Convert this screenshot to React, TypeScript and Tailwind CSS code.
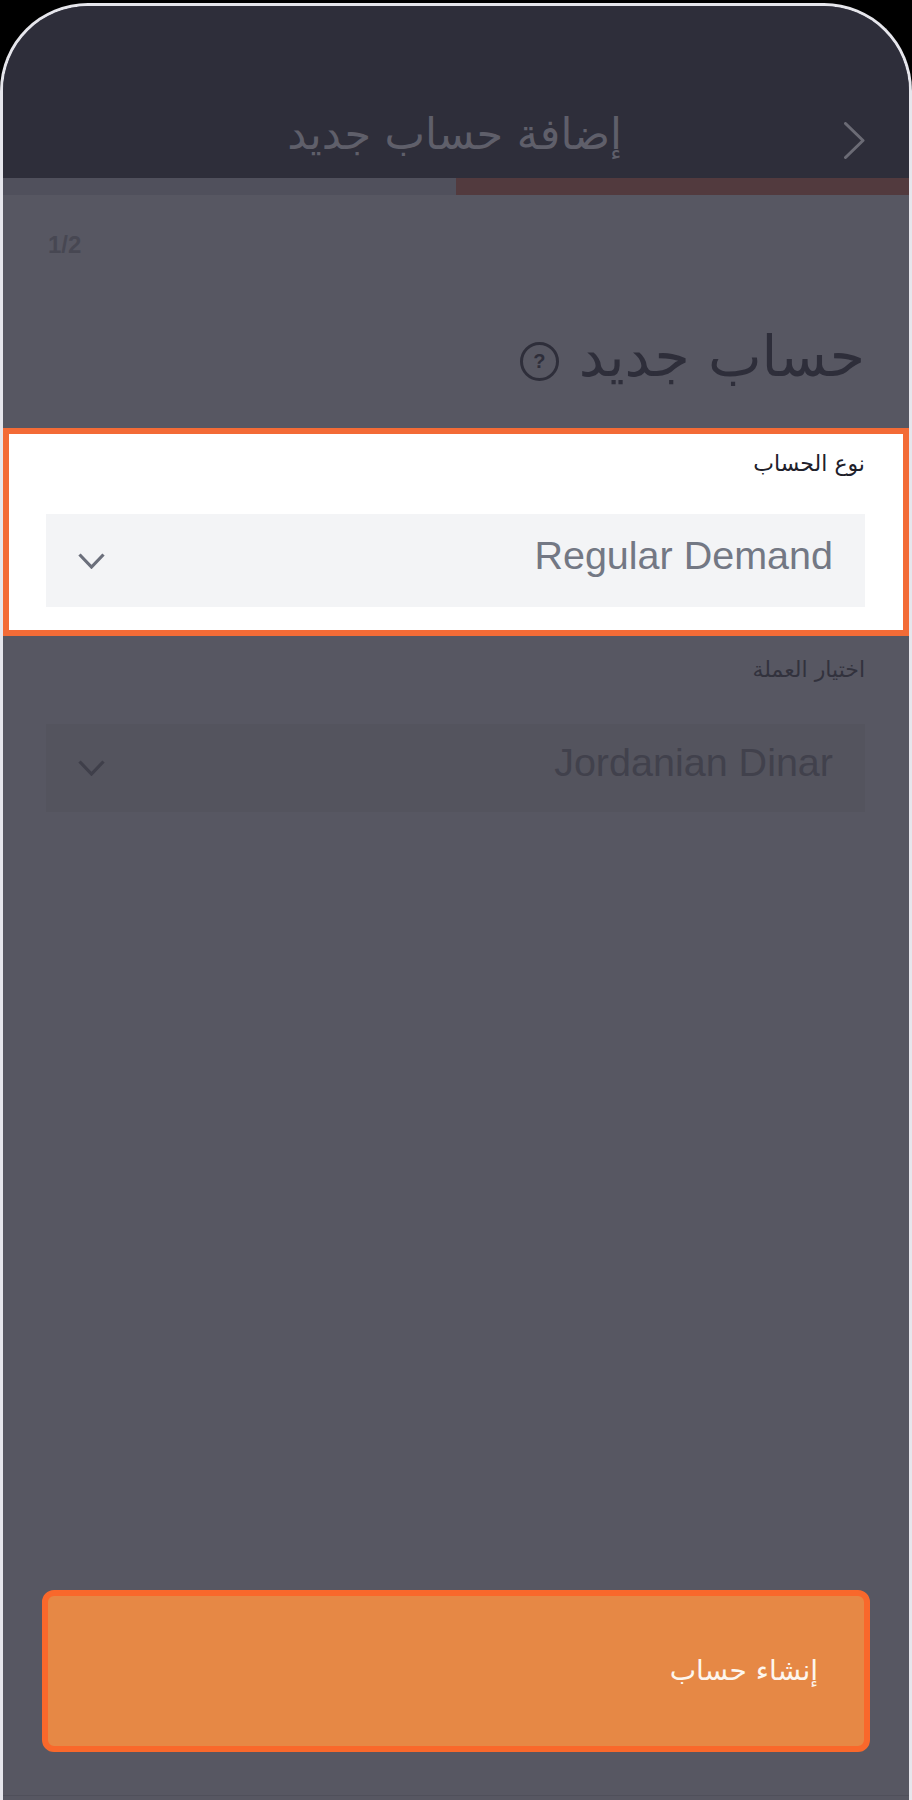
const arabic = "font-['DejaVu_Sans',sans-serif]";
const latin = "font-['Liberation_Sans',Arial,sans-serif]";

function Chevron({ color }: { color: string }) {
  return (
    <svg width="27" height="16" viewBox="0 0 27 16" fill="none" className={color}>
      <path d="M1.5 1.5 13.5 14 25.5 1.5" stroke="currentColor" strokeWidth="3.2" />
    </svg>
  );
}

function SelectField({ value, boxClass, textClass, chevronClass }: { value: string; boxClass: string; textClass: string; chevronClass: string }) {
  return (
    <div className={`flex items-center justify-between px-[32px] ${boxClass}`}>
      <span dir="ltr" className={`${latin} mb-[10px] text-[39.5px] leading-none ${textClass}`}>{value}</span>
      <Chevron color={chevronClass} />
    </div>
  );
}

export default function App() {
  return (
    <div className="h-[1800px] w-[912px] bg-black pt-[3px]">
      <div dir="rtl" className="flex h-[1797px] flex-col overflow-hidden rounded-t-[88px] border-[3px] border-b-0 border-[#e6e6ec] bg-[#575762]">
        {/* header */}
        <div className="flex h-[172px] items-end gap-[222px] bg-[#2e2e3a] pr-[44px] pb-[19px]">
          <svg width="21" height="37" viewBox="0 0 21 37" fill="none" className="text-[#6b6b75]">
            <path d="M1.5 1.5 19 18.5 1.5 35.5" stroke="currentColor" strokeWidth="3" strokeLinecap="round" strokeLinejoin="round" />
          </svg>
          <h1 className={`${arabic} mb-[-2px] text-[43px] leading-[54px] text-[#5f5f6a]`}>إضافة حساب جديد</h1>
        </div>
        <div className="flex h-[17px]">
          <div className="w-1/2 bg-[#523a3e]" />
          <div className="w-1/2 bg-[#50505c]" />
        </div>

        {/* step and title */}
        <div dir="ltr" className={`${latin} pl-[45px] pt-[38px] text-[24px] font-bold leading-[24px] text-[#474752]`}>1/2</div>
        <div className="mt-[73px] flex h-[62px] items-center gap-[20px] pr-[44px]">
          <h2 className={`${arabic} mb-[10px] text-[57px] leading-none text-[#2e2e3a]`}>حساب جديد</h2>
          <span className={`${latin} flex h-[39px] w-[39px] items-center justify-center rounded-full border-[3px] border-[#2e2e3a] text-[20px] font-bold leading-none text-[#2e2e3a]`}>?</span>
        </div>

        {/* highlighted field */}
        <div className="mt-[36px] h-[208px] border-[6px] border-[#f36b36] bg-white">
          <div className={`${arabic} mr-[38px] mt-[16px] h-[64px] text-[22px] leading-[28px] text-[#20202a]`}>نوع الحساب</div>
          <div className="ml-[37px] mr-[38px]">
            <SelectField value="Regular Demand" boxClass="h-[93px] bg-[#f3f4f6]" textClass="text-[#737884]" chevronClass="text-[#6b6f7b]" />
          </div>
        </div>

        {/* dimmed field */}
        <div className={`${arabic} mr-[44px] mt-[20px] text-[22px] leading-[28px] text-[#32323d]`}>اختيار العملة</div>
        <div className="ml-[43px] mr-[44px] mt-[40px]">
          <SelectField value="Jordanian Dinar" boxClass="h-[88px] bg-[#54545e]" textClass="text-[#41414c]" chevronClass="text-[#3f3f4a]" />
        </div>

        {/* submit button */}
        <div className="mt-auto mb-[4px] border-b border-[#4f4f5a] px-[39px] pb-[43px]">
          <button className={`${arabic} flex h-[162px] w-full items-center rounded-[12px] border-[6px] border-[#f9682b] bg-[#e68845] pr-[46px] text-[28px] leading-none text-[#fdf6ee]`}>
            إنشاء حساب
          </button>
        </div>
      </div>
    </div>
  );
}
